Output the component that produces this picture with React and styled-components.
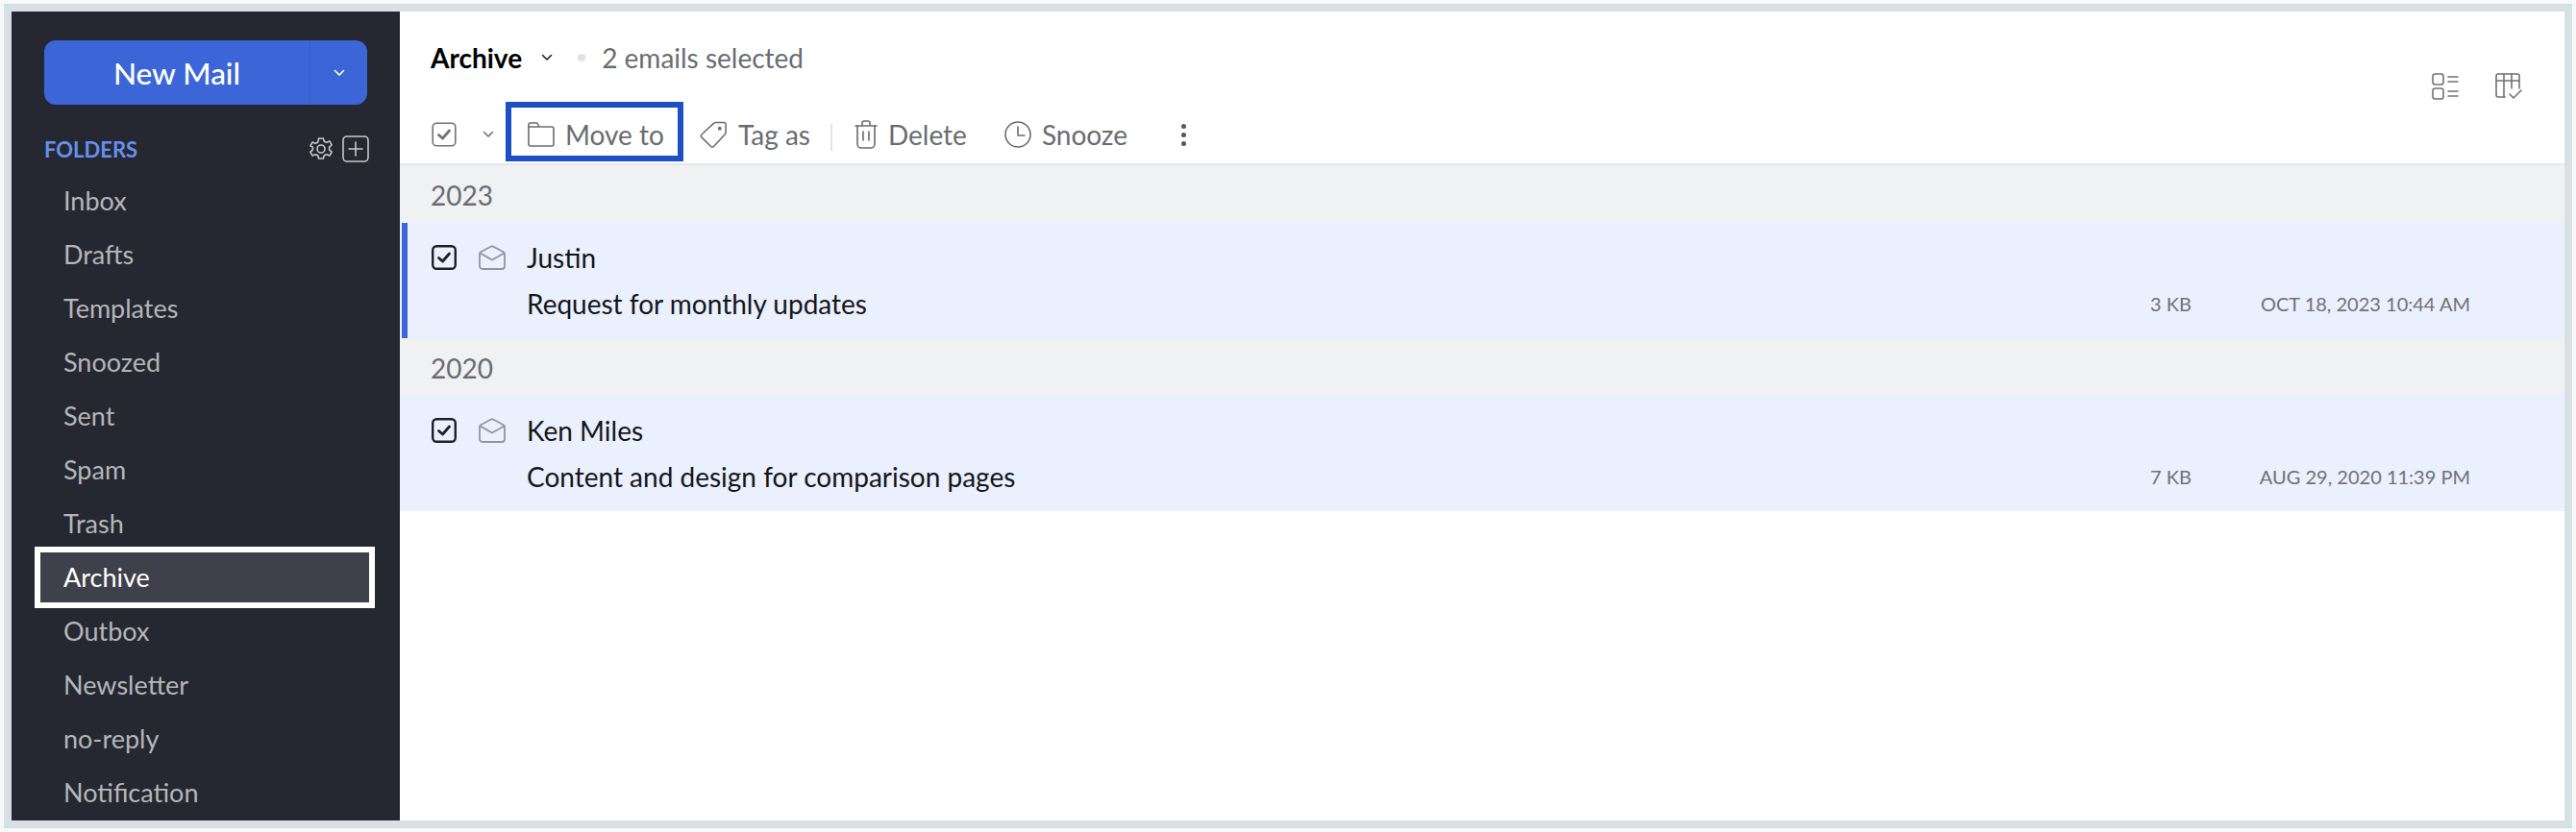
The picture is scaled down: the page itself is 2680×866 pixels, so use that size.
import React from 'react';
import styled, { createGlobalStyle, css } from 'styled-components';

const GlobalStyle = createGlobalStyle`
  html, body {
    margin: 0;
    padding: 0;
    background: #f6f8f9;
    font-family: 'Lato', 'Liberation Sans', sans-serif;
  }
  * { box-sizing: border-box; }
`;

const Icon = ({ w = 28, h = 28, vb = '0 0 28 28', sw = 2, children }) => (
  <svg width={w} height={h} viewBox={vb} fill="none" stroke="currentColor" strokeWidth={sw} strokeLinecap="round" strokeLinejoin="round">
    {children}
  </svg>
);

const Chevron = ({ w = 12 }) => (
  <Icon w={w} h={8} vb="0 0 12 8" sw={1.6}>
    <path d="M1.5 1.5 6 6l4.5-4.5" />
  </Icon>
);

const CheckBox = ({ sw = 2 }) => (
  <Icon w={26} h={26} vb="0 0 26 26" sw={sw}>
    <rect x="1.200" y="1.200" width="23.600" height="23.600" rx="4" />
    <path d="M7.500 13.500l4 3.500 7-8" strokeWidth="2.800" />
  </Icon>
);

const Envelope = () => (
  <Icon w={28} h={26} vb="0 0 28 26" sw={1.8}>
    <path d="M1 9.500c0-1 .5-1.800 1.300-2.300L12.500 1.700a3 3 0 0 1 3 0l10.200 5.500c.8.500 1.300 1.300 1.300 2.300V22a3 3 0 0 1-3 3H4a3 3 0 0 1-3-3z" />
    <path d="M1.500 8.500 14 15.500l12.500-7" />
  </Icon>
);

const folders = ['Inbox', 'Drafts', 'Templates', 'Snoozed', 'Sent', 'Spam', 'Trash', 'Archive', 'Outbox', 'Newsletter', 'no-reply', 'Notification'];

const mails = [
  { year: '2023', name: 'Justin', subject: 'Request for monthly updates', size: '3 KB', date: 'OCT 18, 2023 10:44 AM', active: true },
  { year: '2020', name: 'Ken Miles', subject: 'Content and design for comparison pages', size: '7 KB', date: 'AUG 29, 2020 11:39 PM' },
];

const App = () => {
  return (
    <Page>
      <GlobalStyle />
      <Frame>
        <Sidebar>
          <NewMail>
            <NewMailLabel>New Mail</NewMailLabel>
            <NewMailArrow><Chevron w={14} /></NewMailArrow>
          </NewMail>
          <FolderHead>
            <FolderTitle>FOLDERS</FolderTitle>
            <FolderTools>
              <Icon w={26} h={26} vb="0 0 26 26" sw={1.6}>
                <path d="M10.600 2h4.800l.9 3.200 2.600 1.100 3-1.400 2.200 4-2.500 2.200v2.800l2.500 2.200-2.200 4-3-1.400-2.600 1.100-.9 3.200h-4.800l-.9-3.200-2.600-1.100-3 1.400-2.200-4 2.500-2.200v-2.800L1.900 9.900l2.200-4 3 1.400 2.600-1.100z" />
                <circle cx="13" cy="13" r="4" />
              </Icon>
              <Icon w={28} h={28} vb="0 0 28 28" sw={1.6}>
                <rect x="1" y="1" width="26" height="26" rx="4" />
                <path d="M14 7v14M7 14h14" />
              </Icon>
            </FolderTools>
          </FolderHead>
          <FolderList>
            {folders.map((name) => (
              <FolderItem key={name} $active={name === 'Archive'}>{name}</FolderItem>
            ))}
          </FolderList>
        </Sidebar>
        <Main>
          <TopBar>
            <TitleRow>
              <Title>Archive</Title>
              <TitleChevron><Chevron /></TitleChevron>
              <Dot />
              <Selected>2 emails selected</Selected>
            </TitleRow>
            <ViewTools>
              <Icon w={28} h={28} vb="0 0 28 28" sw={1.6}>
                <rect x="1" y="1" width="11" height="11" rx="2.500" />
                <rect x="1" y="16" width="11" height="11" rx="2.500" />
                <path d="M17 4h10M17 9h10M17 19h10M17 24h10" />
              </Icon>
              <Icon w={28} h={28} vb="0 0 28 28" sw={1.6}>
                <path d="M10 25H3a2 2 0 0 1-2-2V3a2 2 0 0 1 2-2h20a2 2 0 0 1 2 2v13" />
                <path d="M1 8h24M9 1v24M17 1v15" />
                <path d="M15 22l4 4 8-8" />
              </Icon>
            </ViewTools>
          </TopBar>
          <Toolbar>
            <SelectAll>
              <CheckBox sw={1.6} />
              <Chevron />
            </SelectAll>
            <ToolButton $highlight>
              <Icon w={28} h={26} vb="0 0 28 26" sw={1.6}>
                <path d="M1 23V3a2 2 0 0 1 2-2h7l2 4h13a2 2 0 0 1 2 2v16a2 2 0 0 1-2 2H3a2 2 0 0 1-2-2z" />
                <path d="M11 5H1" />
              </Icon>
              Move to
            </ToolButton>
            <ToolButton>
              <Icon w={29} h={30} vb="0 0 30 30" sw={1.6}>
                <path d="M2 15 15 3a3 3 0 0 1 2-1h9a2 2 0 0 1 2 2v9a3 3 0 0 1-1 2L15 28a3 3 0 0 1-3 0L2 18a2 2 0 0 1 0-3z" />
                <circle cx="21.500" cy="8.500" r="1.200" fill="currentColor" />
              </Icon>
              Tag as
            </ToolButton>
            <ToolSeparator />
            <ToolButton $after={5}>
              <Icon w={24} h={30} vb="0 0 24 30" sw={1.6}>
                <path d="M1 6h22M8 6V3a2 2 0 0 1 2-2h4a2 2 0 0 1 2 2v3" />
                <path d="M3 6v19a4 4 0 0 0 4 4h10a4 4 0 0 0 4-4V6" />
                <path d="M9 12v9M15 12v9" />
              </Icon>
              Delete
            </ToolButton>
            <ToolButton>
              <Icon w={28} h={28} vb="0 0 28 28" sw={1.6}>
                <circle cx="14" cy="14" r="13" />
                <path d="M14 6v9h7" />
              </Icon>
              Snooze
            </ToolButton>
            <MoreDots>
              <span /><span /><span />
            </MoreDots>
          </Toolbar>
          {mails.map((mail) => (
            <section key={mail.year}>
              <YearRow>{mail.year}</YearRow>
              <MailRow $active={mail.active}>
                <MailTop>
                  <MailCheck><CheckBox sw={2.4} /></MailCheck>
                  <MailEnvelope><Envelope /></MailEnvelope>
                  <Sender>{mail.name}</Sender>
                </MailTop>
                <MailBottom>
                  <Subject>{mail.subject}</Subject>
                  <MailSize>{mail.size}</MailSize>
                  <MailDate>{mail.date}</MailDate>
                </MailBottom>
              </MailRow>
            </section>
          ))}
        </Main>
      </Frame>
    </Page>
  );
};

export default App;

const Page = styled.div`
  width: 2680px;
  height: 866px;
  padding: 4px;
  overflow: hidden;
`;

const Frame = styled.div`
  width: 2672px;
  height: 858px;
  border: 8px solid #d8e0e4;
  display: flex;
  background: #fff;
`;

const Sidebar = styled.aside`
  width: 404px;
  flex: none;
  background: #252830;
  padding: 30px 34px 0 34px;
  overflow: hidden;
`;

const NewMail = styled.div`
  height: 67px;
  display: flex;
  background: #3c66d8;
  border-radius: 12px;
  color: #fff;
`;

const NewMailLabel = styled.div`
  width: 277px;
  display: flex;
  align-items: center;
  justify-content: center;
  font-size: 31.500px;
  font-weight: 500;
  border-right: 1px solid #3358bd;
`;

const NewMailArrow = styled.div`
  flex: 1;
  display: flex;
  align-items: center;
  justify-content: center;
`;

const FolderHead = styled.div`
  height: 28px;
  margin-top: 32px;
  width: 338px;
  display: flex;
  align-items: center;
  justify-content: space-between;
`;

const FolderTitle = styled.div`
  color: #6690ee;
  font-size: 22px;
  font-weight: 700;
`;

const FolderTools = styled.div`
  display: flex;
  align-items: center;
  gap: 9px;
  margin-right: 0;
  color: #c6c8cc;
`;

const FolderList = styled.nav`
  margin: 12px 0 0 -10px;
  width: 354px;
`;

const FolderItem = styled.div`
  height: 56px;
  line-height: 55px;
  padding-left: 30px;
  font-size: 27px;
  color: #b4b6bb;
  ${(props) => props.$active && css`
    height: 64px;
    line-height: 51px;
    margin: -4px 0;
    border: 6px solid #fff;
    padding-left: 24px;
    background: #3f414a;
    color: #fff;
  `}
`;

const Main = styled.main`
  flex: 1;
  min-width: 0;
  background: #fff;
`;

const TopBar = styled.div`
  height: 94px;
  display: flex;
  justify-content: space-between;
  padding: 26px 44px 0 32px;
`;

const TitleRow = styled.div`
  height: 44px;
  display: flex;
  align-items: center;
`;

const Title = styled.div`
  font-size: 28px;
  font-weight: 700;
  color: #000;
`;

const TitleChevron = styled.span`
  margin-left: 20px;
  display: flex;
  color: #222;
`;

const Dot = styled.span`
  width: 8px;
  height: 8px;
  margin: 0 17px 0 26px;
  border-radius: 50%;
  background: #dfe0e2;
`;

const Selected = styled.div`
  font-size: 28px;
  color: #6a6c72;
`;

const ViewTools = styled.div`
  display: flex;
  gap: 38px;
  margin-top: 38px;
  color: #707276;
  height: 28px;
`;

const Toolbar = styled.div`
  height: 66px;
  display: flex;
  align-items: flex-start;
  padding-left: 33px;
  border-bottom: 2px solid #e6e7e9;
  color: #6a6c72;
`;

const SelectAll = styled.div`
  width: 77px;
  display: flex;
  align-items: center;
  gap: 27px;
  margin-top: 21px;
  color: #707276;
`;

const ToolButton = styled.div`
  height: 62px;
  display: flex;
  align-items: center;
  gap: 11px;
  padding: 6px 17px 0;
  margin-right: ${(props) => props.$after || 0}px;
  font-size: 28px;
  color: #6a6c72;
  ${(props) => props.$highlight && css`
    padding: 6px 14px 0 17px;
    border: 6px solid #1e4fc4;
  `}
`;

const ToolSeparator = styled.span`
  width: 2px;
  height: 28px;
  margin: 23px 6px 0 4px;
  background: #e2e3e5;
`;

const MoreDots = styled.div`
  margin: 23px 0 0 39px;
  display: flex;
  flex-direction: column;
  gap: 4px;
  span {
    width: 5px;
    height: 5px;
    border-radius: 50%;
    background: #55575c;
  }
`;

const YearRow = styled.div`
  height: 60px;
  display: flex;
  align-items: center;
  padding: 2px 0 0 32px;
  background: #f0f1f3;
  font-size: 28px;
  color: #6a6c72;
`;

const MailRow = styled.div`
  height: 120px;
  background: #eaf0fd;
  border-left: 2px solid #eaf0fd;
  box-shadow: inset 6px 0 0 ${(props) => (props.$active ? '#3c66d8' : '#eaf0fd')};
  padding-left: 31px;
  padding-right: 98px;
`;

const MailTop = styled.div`
  height: 72px;
  display: flex;
  align-items: center;
`;

const MailCheck = styled.span`
  display: flex;
  color: #1d2026;
`;

const MailEnvelope = styled.span`
  display: flex;
  margin-left: 23px;
  color: #8f96a3;
`;

const Sender = styled.div`
  margin-left: 22px;
  font-size: 28px;
  color: #14161c;
`;

const MailBottom = styled.div`
  display: flex;
  align-items: center;
  height: 24px;
  padding-left: 99px;
`;

const Subject = styled.div`
  flex: 1;
  font-size: 28px;
  color: #14161c;
`;

const MailSize = styled.div`
  font-size: 20px;
  color: #707276;
`;

const MailDate = styled.div`
  width: 290px;
  text-align: right;
  font-size: 20px;
  color: #707276;
`;
